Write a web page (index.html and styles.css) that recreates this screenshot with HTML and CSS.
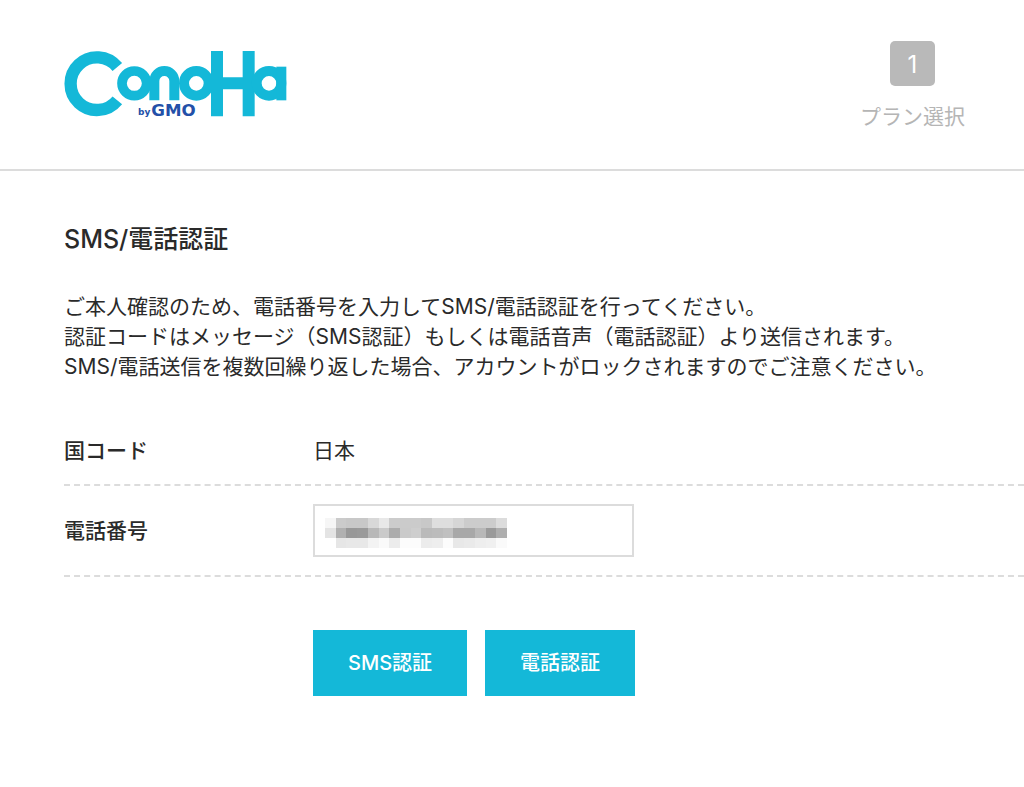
FILE: index.html
```html
<!DOCTYPE html>
<html lang="ja">
<head>
    <meta charset="UTF-8">
    <meta name="viewport" content="width=device-width, initial-scale=1.0">
    <title>SMS/電話認証 | ConoHa</title>
    <link rel="stylesheet" href="styles.css">
</head>
<body>
    <header class="header">
        <a class="logo" href="#" aria-label="ConoHa by GMO">
            <svg viewBox="45 33 666 201" width="222" height="67">
                <g fill="none" stroke="#14b8d8">
                    <path stroke-width="37" d="M202 81A79 79 0 1 0 202 181"/>
                    <circle cx="253" cy="131" r="49" stroke="#fff" stroke-width="18"/>
                    <circle cx="253" cy="130" r="37" stroke-width="29"/>
                    <path stroke-width="30" d="M313 181V123A30 30 0 0 1 373 123V181"/>
                    <circle cx="439" cy="130" r="37" stroke-width="30"/>
                    <path stroke-width="36" d="M501 33V229M596 33V229M500 130H596"/>
                    <circle cx="657" cy="130" r="37" stroke-width="30"/>
                    <path stroke-width="30" d="M694 80V181"/>
                </g>
                <g class="logo-sub">
                    <text x="264" y="225" font-size="27">by</text>
                    <text x="304" y="229" font-size="50">GMO</text>
                </g>
            </svg>
        </a>
        <ol class="steps">
            <li class="step">
                <span class="step-number">1</span>
                <span class="step-label">プラン選択</span>
            </li>
        </ol>
    </header>

    <main class="main">
        <h1>SMS/電話認証</h1>
        <p class="lead">
            ご本人確認のため、電話番号を入力してSMS/電話認証を行ってください。<br>
            認証コードはメッセージ（SMS認証）もしくは電話音声（電話認証）より送信されます。<br>
            SMS/電話送信を複数回繰り返した場合、アカウントがロックされますのでご注意ください。
        </p>

        <form class="form">
            <div class="row">
                <span class="row-title">国コード</span>
                <span>日本</span>
            </div>
            <div class="row row-input">
                <label class="row-title" for="tel">電話番号</label>
                <div class="field">
                    <input type="tel" id="tel">
                    <svg class="mask" id="mask" viewBox="0 0 17 3" preserveAspectRatio="none" shape-rendering="crispEdges" aria-hidden="true"></svg>
                </div>
            </div>
            <div class="buttons">
                <button type="button">SMS認証</button>
                <button type="button">電話認証</button>
            </div>
        </form>
    </main>

    <script>
        // 電話番号のモザイク（各マスの明るさ）
        const mosaic = [
            [246, 203, 200, 200, 216, 232, 204, 203, 203, 200, 222, 222, 214, 204, 204, 204, 220],
            [228, 176, 152, 154, 184, 202, 172, 202, 206, 186, 188, 192, 168, 168, 184, 154, 174],
            [255, 230, 232, 232, 243, 250, 236, 252, 252, 236, 238, 252, 232, 234, 238, 240, 250]
        ];

        const mask = document.getElementById('mask');
        mosaic.forEach((line, y) => {
            line.forEach((v, x) => {
                const rect = document.createElementNS('http://www.w3.org/2000/svg', 'rect');
                rect.setAttribute('x', x);
                rect.setAttribute('y', y);
                rect.setAttribute('width', 1);
                rect.setAttribute('height', 1);
                rect.setAttribute('fill', `rgb(${v}, ${v}, ${v})`);
                mask.appendChild(rect);
            });
        });
    </script>
</body>
</html>
```
FILE: styles.css
```css
* {
    box-sizing: border-box;
}

body {
    margin: 0;
    background-color: #fff;
    color: #2a2a2a;
    font-family: Inter, "Noto Sans CJK JP", sans-serif;
    font-size: 21px;
    line-height: 30px;
}

.header {
    display: flex;
    justify-content: space-between;
    align-items: flex-start;
    padding: 41px 59px 37px 65px;
    border-bottom: 2px solid #dcdcdc;
}

.logo {
    margin-top: 10px;
}

.logo svg {
    display: block;
    overflow: visible;
}

.logo-sub {
    fill: #2350a8;
    font-family: "DejaVu Sans", sans-serif;
    font-weight: bold;
}

.steps {
    margin: 0;
    padding: 0;
    list-style: none;
}

.step {
    display: flex;
    flex-direction: column;
    align-items: center;
    gap: 16px;
    color: #b5b5b5;
}

.step-number {
    width: 45px;
    height: 45px;
    border-radius: 5px;
    background-color: #b9b9b9;
    color: #fff;
    font-size: 24px;
    line-height: 48px;
    text-align: center;
}

.main {
    padding: 52px 0 0 64px;
}

h1 {
    margin: 0 0 37px;
    font-size: 25px;
    font-weight: 500;
    line-height: 32px;
}

.lead {
    margin: 0 0 54px;
    white-space: nowrap;
}

.row {
    display: flex;
    align-items: center;
    padding-bottom: 18px;
    border-bottom: 2px dashed #dcdcdc;
}

.row-input {
    padding-top: 18px;
}

.row-title {
    width: 249px;
    font-weight: 500;
}

.field {
    position: relative;
}

.field input {
    display: block;
    width: 321px;
    height: 53px;
    padding: 0 16px;
    border: 2px solid #dcdcdc;
    font: inherit;
}

.mask {
    position: absolute;
    top: 14px;
    left: 12px;
    width: 182px;
    height: 30px;
}

.buttons {
    display: flex;
    gap: 18px;
    padding: 53px 0 0 249px;
}

button {
    height: 66px;
    padding: 0 35px;
    border: none;
    background-color: #14b8d8;
    color: #fff;
    font: inherit;
    font-size: 20px;
    font-weight: 500;
    cursor: pointer;
}
```
